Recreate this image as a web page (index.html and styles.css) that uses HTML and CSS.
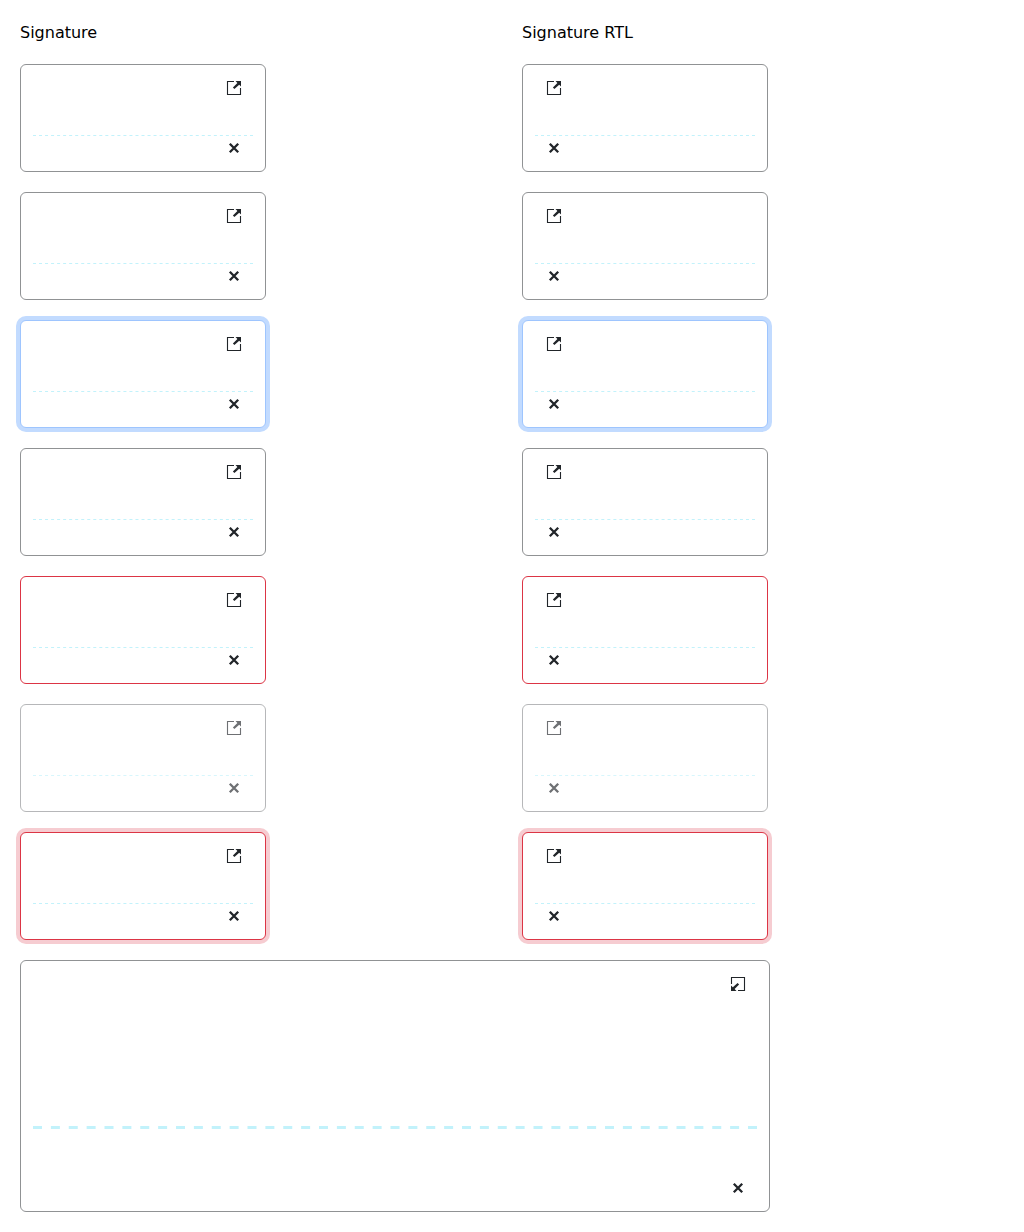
FILE: index.html
```
<!DOCTYPE html>
<html lang="en">
<head>
<meta charset="utf-8">
<title>Signature</title>
<link rel="stylesheet" href="styles.css">
</head>
<body>
<svg class="defs" aria-hidden="true">
  <symbol id="open" viewBox="0 0 16 16">
    <path d="M8 1.5H1.5V14.5H14.5V8" fill="none" stroke="currentColor" stroke-width="1.1"/>
    <path d="M9.5 1H15V6.5L13.2 4.7L8.4 9.1L6.9 7.6L11.4 2.9Z" fill="currentColor"/>
  </symbol>
  <symbol id="close" viewBox="0 0 16 16">
    <path d="M3.8 3.8L12.2 12.2M12.2 3.8L3.8 12.2" fill="none" stroke="currentColor" stroke-width="2.3"/>
  </symbol>
  <symbol id="rule" overflow="visible">
    <line x1="0" x2="100%" y1=".5" y2=".5" stroke="currentColor" stroke-dasharray="3 3.028"/>
  </symbol>
</svg>
<main class="grid">
  <div class="title">Signature</div>
  <div class="title">Signature RTL</div>

  <div class="signature"><svg class="icon"><use href="#open"/></svg><svg class="line"><use href="#rule"/></svg><svg class="icon"><use href="#close"/></svg></div>
  <div class="signature" dir="rtl"><svg class="icon"><use href="#open"/></svg><svg class="line"><use href="#rule"/></svg><svg class="icon"><use href="#close"/></svg></div>

  <div class="signature"><svg class="icon"><use href="#open"/></svg><svg class="line"><use href="#rule"/></svg><svg class="icon"><use href="#close"/></svg></div>
  <div class="signature" dir="rtl"><svg class="icon"><use href="#open"/></svg><svg class="line"><use href="#rule"/></svg><svg class="icon"><use href="#close"/></svg></div>

  <div class="signature focus"><svg class="icon"><use href="#open"/></svg><svg class="line"><use href="#rule"/></svg><svg class="icon"><use href="#close"/></svg></div>
  <div class="signature focus" dir="rtl"><svg class="icon"><use href="#open"/></svg><svg class="line"><use href="#rule"/></svg><svg class="icon"><use href="#close"/></svg></div>

  <div class="signature"><svg class="icon"><use href="#open"/></svg><svg class="line"><use href="#rule"/></svg><svg class="icon"><use href="#close"/></svg></div>
  <div class="signature" dir="rtl"><svg class="icon"><use href="#open"/></svg><svg class="line"><use href="#rule"/></svg><svg class="icon"><use href="#close"/></svg></div>

  <div class="signature invalid"><svg class="icon"><use href="#open"/></svg><svg class="line"><use href="#rule"/></svg><svg class="icon"><use href="#close"/></svg></div>
  <div class="signature invalid" dir="rtl"><svg class="icon"><use href="#open"/></svg><svg class="line"><use href="#rule"/></svg><svg class="icon"><use href="#close"/></svg></div>

  <div class="signature disabled"><svg class="icon"><use href="#open"/></svg><svg class="line"><use href="#rule"/></svg><svg class="icon"><use href="#close"/></svg></div>
  <div class="signature disabled" dir="rtl"><svg class="icon"><use href="#open"/></svg><svg class="line"><use href="#rule"/></svg><svg class="icon"><use href="#close"/></svg></div>

  <div class="signature invalid invalid-focus"><svg class="icon"><use href="#open"/></svg><svg class="line"><use href="#rule"/></svg><svg class="icon"><use href="#close"/></svg></div>
  <div class="signature invalid invalid-focus" dir="rtl"><svg class="icon"><use href="#open"/></svg><svg class="line"><use href="#rule"/></svg><svg class="icon"><use href="#close"/></svg></div>

  <div class="signature maximized">
    <svg class="icon minimize"><use href="#open"/></svg>
    <svg class="line"><line x1="0" x2="100%" y1="1.5" y2="1.5" stroke="currentColor" stroke-width="3" stroke-dasharray="9 8.875"/></svg>
    <svg class="icon"><use href="#close"/></svg>
  </div>
</main>
</body>
</html>
```
FILE: styles.css
```
* {
  box-sizing: border-box;
}

body {
  margin: 0;
  background: #fff;
  color: #000;
  font: 16px/24px "DejaVu Sans", sans-serif;
}

.defs {
  display: none;
}

.grid {
  display: grid;
  grid-template-columns: 482px 482px;
  gap: 20px;
  padding: 20px;
}

.title {
  height: 24px;
  line-height: 26px;
}

.signature {
  display: flex;
  flex-direction: column;
  width: 246px;
  height: 108px;
  padding: 15px 12px;
  border: 1px solid #909294;
  border-radius: 6px;
  background: #fff;
  color: #212529;
}

.icon {
  flex: none;
  align-self: flex-end;
  width: 16px;
  height: 16px;
  margin-inline-end: 11px;
}

.line {
  flex: none;
  width: 100%;
  height: 1px;
  margin: 39px 0 4px;
  color: #c2f2fb;
}

.focus {
  border-color: #9ec5fe;
  box-shadow: 0 0 0 4px #c2dbff;
}

.invalid {
  border-color: #dc3545;
}

.invalid-focus {
  box-shadow: 0 0 0 4px #f6ccd1;
}

.disabled {
  opacity: .65;
}

.maximized {
  grid-column: 1 / -1;
  width: 750px;
  height: 252px;
}

.maximized .line {
  height: 3px;
  margin: 134px 0 51px;
}

.minimize {
  transform: rotate(180deg);
}
```
